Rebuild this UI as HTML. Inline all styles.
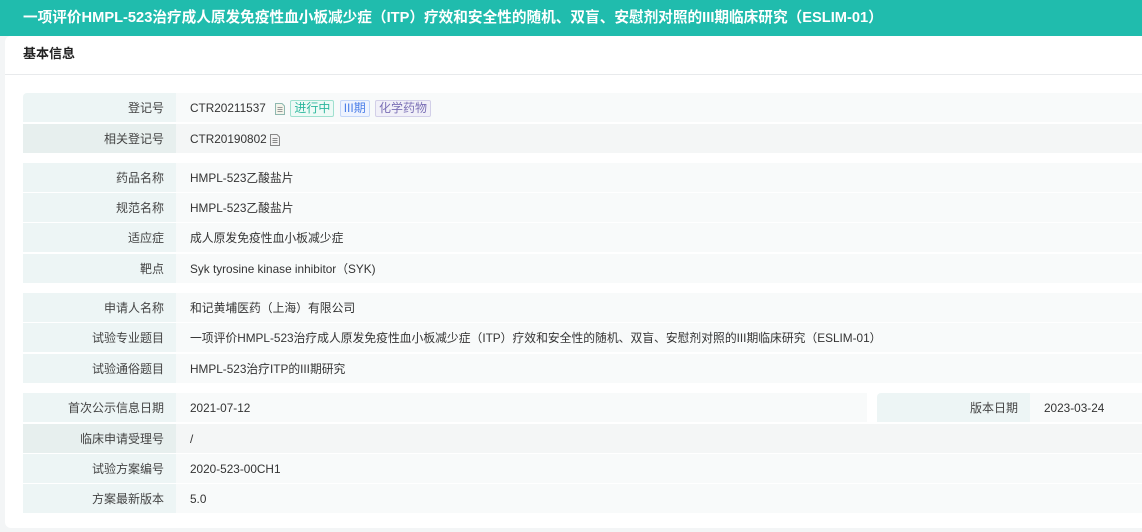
<!DOCTYPE html>
<html><head><meta charset="utf-8"><style>
*{box-sizing:border-box;margin:0;padding:0}
body{width:1142px;height:532px;overflow:hidden;background:#f3f5f6;font-family:"Liberation Sans","Noto Sans CJK SC",sans-serif;font-size:12px;color:#333;position:relative}
.hd{position:absolute;left:0;top:0;width:1142px;height:36px;background:#20bcad;color:#fff;font-weight:bold;font-size:14.65px;line-height:36px;padding-left:23px;white-space:nowrap}
.card{position:absolute;left:5px;top:36px;width:1150px;height:492px;background:#fff;border-radius:6px}
.t{position:absolute;left:23px;top:44px;font-size:13px;font-weight:bold;color:#222;line-height:20px}
.line{position:absolute;left:5px;top:74px;width:1137px;height:1px;background:#e8eaec}
.row{position:absolute;left:23px;height:29px;line-height:30px;width:1119px;display:flex}
.l{width:153px;background:#edf5f5;text-align:right;padding-right:12px;color:#444}
.row.d .l{background:#e7efee}
.v{flex:1;background:#f8fafa;padding-left:14px;white-space:nowrap;font-size:11.8px}
.row.d .v{background:#f4f6f6}
.r1{border-radius:4px 0 0 0}
.tag{display:inline-block;height:17px;line-height:15px;padding:0 3px;border:1px solid;border-radius:2px;font-size:12px;margin-left:2px;vertical-align:middle}
.doc{display:inline-block;vertical-align:middle;margin-left:6px}
</style></head><body>
<div class="hd">一项评价HMPL-523治疗成人原发免疫性血小板减少症（ITP）疗效和安全性的随机、双盲、安慰剂对照的III期临床研究（ESLIM-01）</div>
<div class="card"></div>
<div class="t">基本信息</div>
<div class="line"></div>

<div class="row" style="top:93px"><div class="l r1">登记号</div><div class="v">CTR20211537 <svg class="doc" width="10" height="12" viewBox="0 0 10 12"><path d="M0.5 0.5H7L9.5 3V11.5H0.5Z" fill="#f4f4ea" stroke="#8fb8b0"/><path d="M2.5 4.5h5M2.5 6.5h5M2.5 8.5h5" stroke="#999"/></svg> <span class="tag" style="color:#2bb79c;border-color:#9fe0cf;background:#eefaf6">进行中</span> <span class="tag" style="color:#4a7ee8;border-color:#c4d6f8;background:#eef3fe">III期</span> <span class="tag" style="color:#7a6fb5;border-color:#d2cfe8;background:#f1f0f8">化学药物</span></div></div>
<div class="row d" style="top:124px"><div class="l">相关登记号</div><div class="v">CTR20190802<svg class="doc" style="margin-left:3px" width="10" height="12" viewBox="0 0 10 12"><path d="M0.5 0.5H7L9.5 3V11.5H0.5Z" fill="#f2f2f2" stroke="#888"/><path d="M2.5 4.5h5M2.5 6.5h5M2.5 8.5h5" stroke="#888"/></svg></div></div>

<div class="row" style="top:163px"><div class="l">药品名称</div><div class="v">HMPL-523乙酸盐片</div></div>
<div class="row" style="top:193px"><div class="l">规范名称</div><div class="v">HMPL-523乙酸盐片</div></div>
<div class="row" style="top:223px"><div class="l">适应症</div><div class="v">成人原发免疫性血小板减少症</div></div>
<div class="row" style="top:254px"><div class="l">靶点</div><div class="v">Syk tyrosine kinase inhibitor（SYK)</div></div>

<div class="row" style="top:293px"><div class="l">申请人名称</div><div class="v">和记黄埔医药（上海）有限公司</div></div>
<div class="row" style="top:323px"><div class="l">试验专业题目</div><div class="v">一项评价HMPL-523治疗成人原发免疫性血小板减少症（ITP）疗效和安全性的随机、双盲、安慰剂对照的III期临床研究（ESLIM-01）</div></div>
<div class="row" style="top:354px"><div class="l">试验通俗题目</div><div class="v">HMPL-523治疗ITP的III期研究</div></div>

<div class="row" style="top:393px;background:#fff"><div class="l">首次公示信息日期</div><div class="v" style="flex:none;width:691px">2021-07-12</div><div style="width:10px;background:#fff"></div><div class="l" style="border-radius:4px 0 0 0">版本日期</div><div class="v">2023-03-24</div></div>
<div class="row d" style="top:424px"><div class="l">临床申请受理号</div><div class="v">/</div></div>
<div class="row" style="top:454px"><div class="l">试验方案编号</div><div class="v">2020-523-00CH1</div></div>
<div class="row" style="top:484px"><div class="l">方案最新版本</div><div class="v">5.0</div></div>
</body></html>
